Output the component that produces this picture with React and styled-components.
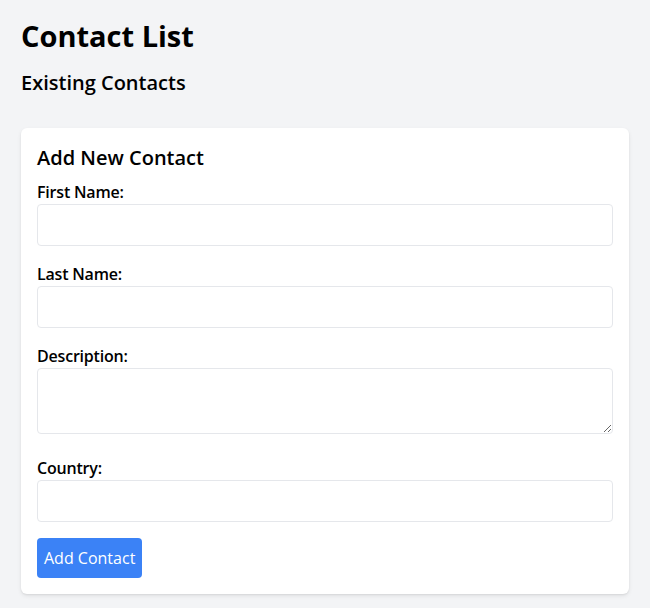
import React, { useState } from "react";
import styled, { createGlobalStyle } from "styled-components";

const GlobalStyle = createGlobalStyle`
  html, body {
    margin: 0;
    padding: 0;
    background-color: #f3f4f6;
    font-family: "Open Sans", "Noto Sans", sans-serif;
    color: #000;
  }
  * {
    box-sizing: border-box;
  }
`;

const Page = styled.div`
  padding: 18px 21px 14px;
  min-height: 608px;
`;

const Title = styled.h1`
  margin: 0 0 15px;
  font-size: 29px;
  line-height: 36px;
  font-weight: 700;
`;

const SubTitle = styled.h2`
  margin: 0 0 31px;
  font-size: 20px;
  line-height: 28px;
  font-weight: 600;
`;

const Card = styled.form`
  background-color: #fff;
  border-radius: 6px;
  padding: 16px;
  box-shadow: 0 2px 4px rgba(0, 0, 0, 0.08), 0 1px 2px rgba(0, 0, 0, 0.06);
`;

const CardTitle = styled.h3`
  margin: 0 0 8px;
  font-size: 20px;
  line-height: 28px;
  font-weight: 600;
`;

const Field = styled.div`
  display: flex;
  flex-direction: column;
  gap: 2px;
  margin-bottom: ${(p) => (p.$tall ? "22px" : "16px")};
`;

const Label = styled.label`
  padding-top: 2px;
  font-size: 16px;
  line-height: 20px;
  font-weight: 600;
  letter-spacing: -0.2px;
`;

const Input = styled.input`
  display: block;
  width: 100%;
  height: 42px;
  padding: 8px 12px;
  border: 1px solid #e5e7eb;
  border-radius: 4px;
  font: inherit;
  font-size: 16px;
  outline: none;
  background: #fff;
`;

const TextArea = styled.textarea`
  display: block;
  width: 100%;
  height: 66px;
  padding: 8px 12px;
  border: 1px solid #e5e7eb;
  border-radius: 4px;
  font: inherit;
  font-size: 16px;
  outline: none;
  resize: vertical;
`;

const SubmitButton = styled.button`
  display: block;
  height: 40px;
  padding: 0 7px;
  border: none;
  border-radius: 4px;
  background-color: #3b82f6;
  color: #fff;
  font-family: inherit;
  font-size: 16px;
  line-height: 24px;
  cursor: pointer;
`;

const fields = [
  { key: "firstName", label: "First Name:" },
  { key: "lastName", label: "Last Name:" },
  { key: "description", label: "Description:", multiline: true },
  { key: "country", label: "Country:" },
];

const App = () => {
  const [form, setForm] = useState({
    firstName: "",
    lastName: "",
    description: "",
    country: "",
  });

  const update = (key) => (e) => setForm({ ...form, [key]: e.target.value });

  return (
    <Page>
      <GlobalStyle />
      <Title>Contact List</Title>
      <SubTitle>Existing Contacts</SubTitle>
      <Card onSubmit={(e) => e.preventDefault()}>
        <CardTitle>Add New Contact</CardTitle>
        {fields.map((f) => (
          <Field key={f.key} $tall={f.multiline}>
            <Label htmlFor={f.key}>{f.label}</Label>
            {f.multiline ? (
              <TextArea id={f.key} value={form[f.key]} onChange={update(f.key)} />
            ) : (
              <Input id={f.key} type="text" value={form[f.key]} onChange={update(f.key)} />
            )}
          </Field>
        ))}
        <SubmitButton type="submit">Add Contact</SubmitButton>
      </Card>
    </Page>
  );
};

export default App;
